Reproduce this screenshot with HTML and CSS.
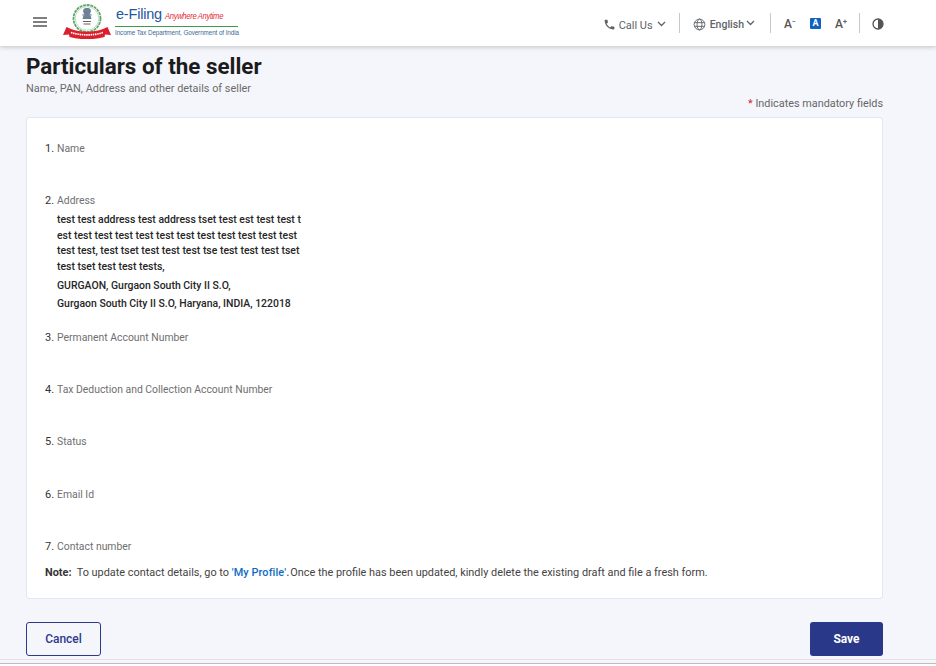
FILE: index.html
```html
<!DOCTYPE html>
<html lang="en">
<head>
<meta charset="utf-8">
<title>Particulars of the seller</title>
<link rel="stylesheet" href="styles.css">
</head>
<body>
<header class="topbar">
  <div class="brand">
    <svg class="menu-icon" width="14" height="10" viewBox="0 0 14 10"><path d="M0 1h14M0 5h14M0 9h14" stroke="#555" stroke-width="1.300" fill="none"/></svg>
    <svg class="emblem" width="48" height="36" viewBox="0 0 48 36">
      <circle cx="24" cy="15.500" r="13.500" fill="none" stroke="#5fa868" stroke-width="1.800" stroke-dasharray="3 .7"/>
      <circle cx="24" cy="15.500" r="11.800" fill="none" stroke="#a9cfae" stroke-width=".8"/>
      <path d="M20.500 6c1-1.500 6-1.500 7 0l.5 3-1 1 1.500 6h-9l1.500-6-1-1z" fill="#6d8296"/>
      <path d="M19.500 12h2M26.500 12h2" stroke="#94a7b8" stroke-width="2"/>
      <path d="M20 18.500h8M20.500 21h7" stroke="#6a5f55" stroke-width="1"/>
      <path d="M0 32l3.500-8 4.500 2c10 3.500 22 3.500 32 0l4.500-2 3.500 8-6-.5-.5 2.500c-11.500 3-23.500 3-35 0l-.5-2.500z" fill="#d9202c"/>
      <path d="M8 29.500c10 3.200 22 3.200 32 0" stroke="#fff" stroke-width="1.600" stroke-dasharray="1.500 .7" fill="none"/>
    </svg>
    <div class="wordmark">
      <div class="wordmark-top"><span class="efiling">e-Filing</span><span class="tagline">Anywhere Anytime</span></div>
      <div class="dept">Income Tax Department, Government of India</div>
    </div>
  </div>
  <div class="tools">
    <div class="tool call">
      <svg width="13" height="13" viewBox="0 0 24 24"><path d="M6.600 10.800c1.400 2.800 3.800 5.100 6.600 6.600l2.200-2.200c.3-.3.700-.4 1-.2 1.100.4 2.300.6 3.600.6.600 0 1 .4 1 1V20c0 .6-.4 1-1 1C10.600 21 3 13.400 3 4c0-.6.4-1 1-1h3.500c.6 0 1 .4 1 1 0 1.300.2 2.500.6 3.600.1.300 0 .7-.2 1z" fill="#5f6368"/></svg>
      <span>Call Us</span>
      <svg class="chev" width="9" height="6" viewBox="0 0 9 6"><path d="M1 1l3.500 3.500L8 1" fill="none" stroke="#5f6368" stroke-width="1.300"/></svg>
    </div>
    <i class="sep"></i>
    <div class="tool lang">
      <svg width="13" height="13" viewBox="0 0 14 14" fill="none" stroke="#5f6368" stroke-width="1"><circle cx="7" cy="7" r="5.800"/><ellipse cx="7" cy="7" rx="2.600" ry="5.800"/><path d="M1.500 5h11M1.500 9h11"/></svg>
      <span>English</span>
      <svg class="chev up" width="9" height="6" viewBox="0 0 9 6"><path d="M1 1l3.500 3.500L8 1" fill="none" stroke="#5f6368" stroke-width="1.300"/></svg>
    </div>
    <i class="sep second"></i>
    <div class="font-tools">
      <span class="font-a">A<sup>&#8722;</sup></span>
      <span class="font-box">A</span>
      <span class="font-a">A<sup>+</sup></span>
    </div>
    <i class="sep third"></i>
    <svg class="contrast" width="12" height="12" viewBox="0 0 12 12"><circle cx="6" cy="6" r="5" fill="#fff" stroke="#555" stroke-width="1.300"/><path d="M6 1a5 5 0 0 1 0 10z" fill="#555"/></svg>
  </div>
</header>

<main class="page">
  <h1 class="title">Particulars of the seller</h1>
  <p class="subtitle">Name, PAN, Address and other details of seller</p>
  <p class="mandatory"><span class="star">*</span> Indicates mandatory fields</p>
  <section class="card">
    <div class="field"><span class="num">1.</span><span class="label">Name</span></div>
    <div class="field address-field">
      <span class="num">2.</span><span class="label">Address</span>
      <div class="address">
        <div class="address-main">test test address test address tset test est test test t<br>est test test test test test test test test test test test<br>test test, test tset test test test tse test test test tset<br>test tset test test tests,</div>
        <div class="address-line">GURGAON, Gurgaon South City II S.O,</div>
        <div class="address-line">Gurgaon South City II S.O, Haryana, INDIA, 122018</div>
      </div>
    </div>
    <div class="field"><span class="num">3.</span><span class="label">Permanent Account Number</span></div>
    <div class="field"><span class="num">4.</span><span class="label">Tax Deduction and Collection Account Number</span></div>
    <div class="field"><span class="num">5.</span><span class="label">Status</span></div>
    <div class="field"><span class="num">6.</span><span class="label">Email Id</span></div>
    <div class="field last"><span class="num">7.</span><span class="label">Contact number</span></div>
    <p class="note"><strong>Note:</strong>&nbsp; To update contact details, go to <a class="link">'My Profile'.</a>Once the profile has been updated, kindly delete the existing draft and file a fresh form.</p>
  </section>
  <div class="actions">
    <button class="btn cancel">Cancel</button>
    <button class="btn save">Save</button>
  </div>
</main>
<div class="bottom-rule"></div>
</body>
</html>
```
FILE: styles.css
```css
* { box-sizing: border-box; }
html, body { margin: 0; height: 666px; overflow: hidden; }
body { background: #f5f6fb; font-family: Roboto, "Liberation Sans", sans-serif; color: #1f1f1f; }

.topbar { height: 46px; background: #fff; box-shadow: 0 1px 5px rgba(0,0,0,.22); display: flex; justify-content: space-between; align-items: center; padding: 0 52px 0 33px; position: relative; }
.brand { display: flex; align-items: center; }
.menu-icon { margin-right: 16px; margin-top: -2px; }
.emblem { margin-top: -4px; margin-right: 4px; }
.wordmark { width: 123px; margin-top: -3px; }
.wordmark-top { display: flex; align-items: baseline; border-bottom: 1px solid #3f9a4b; height: 21px; font-family: "Liberation Sans", sans-serif; white-space: nowrap; }
.efiling { color: #22579e; font-size: 14.500px; letter-spacing: -.2px; margin-left: 1px; }
.tagline { color: #df2b37; font-size: 9px; font-style: italic; margin-left: 3px; letter-spacing: -.4px; transform: scaleX(.85); transform-origin: left center; }
.dept { color: #3a6a96; font-family: "Liberation Sans", sans-serif; font-size: 7.600px; line-height: 10px; margin-top: 1px; white-space: nowrap; letter-spacing: -.1px; transform: scaleX(.83); transform-origin: left center; }

.tools { display: flex; align-items: center; color: #5f6368; font-size: 11px; margin-top: 2px; }
.tool { display: flex; align-items: center; }
.call span { margin-left: 3px; margin-top: 2px; }
.call .chev { margin-left: 4px; }
.sep { width: 1px; height: 20px; background: #c9c9c9; margin: -3px 13px 0 13px; }
.lang span { margin-left: 4px; font-weight: 500; font-size: 10.500px; }
.lang .chev { margin-left: 2px; margin-top: -2px; }
.sep.second { margin: -3px 13px 0 15px; }
.font-tools { display: flex; align-items: center; gap: 14px; }
.font-a { font-size: 12px; font-weight: 500; color: #555; width: 12px; white-space: nowrap; line-height: 12px; }
.font-a sup { font-size: 7px; line-height: 0; vertical-align: 4px; }
.font-box { width: 11px; height: 11px; background: #0f62c4; color: #fff; font-size: 9px; font-weight: 700; line-height: 11px; text-align: center; border-radius: 1px; margin-top: -1px; }
.sep.third { margin: -3px 12px 0 12px; }
.contrast { margin-top: -1px; }

.page { padding: 8px 53px 0 26px; }
.title { margin: 0; font-size: 22.400px; line-height: 25px; font-weight: 700; color: #1b1b1b; }
.subtitle { margin: 3px 0 0; font-size: 10.900px; line-height: 13px; color: #6b6b6b; }
.mandatory { margin: 2px 0 0; text-align: right; font-size: 10.850px; line-height: 13px; color: #666; }
.star { color: #d4202c; }

.card { margin-top: 7px; height: 482px; background: #fff; border: 1px solid #e3e6f1; border-radius: 3px; padding: 24px 18px 0; }
.field { height: 52.150px; font-size: 10.400px; line-height: 13px; }
.address-field { height: 137px; }
.field.last { height: 26.500px; }
.num { display: inline-block; width: 12px; color: #333; font-size: 11px; }
.label { color: #6f6f6f; }
.address { margin: 5px 0 0 12px; font-weight: 500; font-size: 10.450px; color: #262626; }
.address-main { line-height: 15.600px; }
.address-line { line-height: 13px; margin-top: 5px; }
.address-main + .address-line { margin-top: 4px; }
.note { margin: 0; font-size: 10.900px; line-height: 13px; color: #444; }
.note strong { font-weight: 700; color: #333; }
.link { color: #0f6cc4; font-weight: 500; margin-right: 1px; letter-spacing: .1px; }

.actions { display: flex; justify-content: space-between; margin-top: 23px; }
.btn { width: 75px; height: 34px; border-radius: 3px; font: 500 12px Roboto, sans-serif; }
.cancel { background: transparent; border: 1px solid #2c3a8c; color: #2c3a8c; }
.save { width: 73px; background: #2a3889; border: 0; color: #fff; font-weight: 700; }

.bottom-rule { position: fixed; left: 0; right: 0; bottom: 0; height: 7px; background: #fff; border-top: 1px solid #e2e2e2; box-shadow: inset 0 3px 0 #f5f6fb, inset 0 4px 0 #bdbdbd; }
```
